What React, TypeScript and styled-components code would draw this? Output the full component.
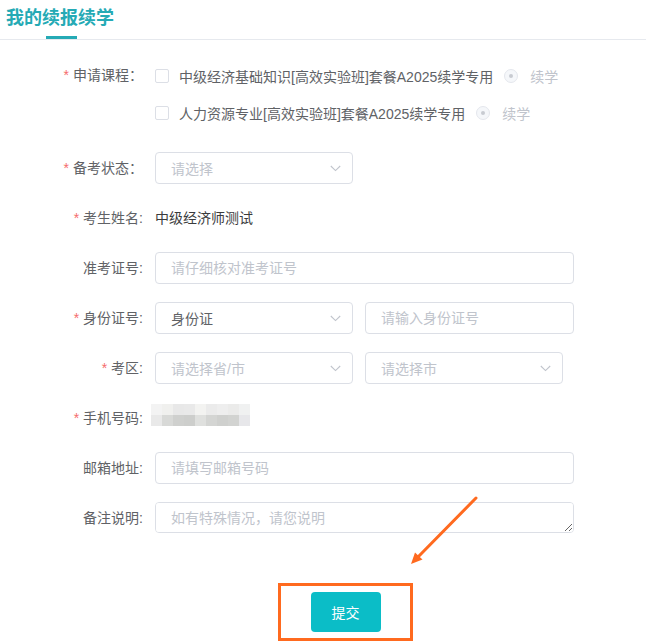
import React from "react";
import styled, { createGlobalStyle } from "styled-components";

const GlobalStyle = createGlobalStyle`
  html, body { margin: 0; padding: 0; background: #fff; }
  body {
    font-family: "Liberation Sans", "Noto Sans CJK SC", sans-serif;
    font-size: 14px;
    color: #606266;
  }
  * { box-sizing: border-box; }
`;

const Page = styled.div`
  position: relative;
  width: 646px;
  height: 642px;
  overflow: hidden;
`;

const Header = styled.div`
  padding: 6px 0 0 6px;
  border-bottom: 1px solid #e6e9ee;
`;

const Title = styled.div`
  font-size: 18px;
  font-weight: bold;
  line-height: 24px;
  color: #25aab5;
`;

const Indicator = styled.div`
  margin: 6px 0 0 40px;
  width: 31px;
  height: 3px;
  background: #25aab5;
`;

const Form = styled.div`
  padding-top: 17px;
`;

const FormItem = styled.div<{ $mb?: number }>`
  display: flex;
  align-items: flex-start;
  margin-bottom: ${(p) => (p.$mb ?? 18)}px;
`;

const Label = styled.div<{ $lh?: number }>`
  width: 155px;
  flex-shrink: 0;
  padding-right: 12px;
  text-align: right;
  line-height: ${(p) => p.$lh ?? 32}px;
  font-size: 14px;
  color: #606266;
  white-space: nowrap;
`;

const Star = styled.span`
  color: #f56c6c;
  margin-right: 4px;
`;

const Content = styled.div`
  display: flex;
  flex-direction: column;
`;

const Line = styled.div`
  display: flex;
  align-items: center;
  height: 37px;
`;

const CheckBox = styled.span`
  width: 14px;
  height: 14px;
  border: 1px solid #dcdfe6;
  border-radius: 2px;
  background: #fff;
  margin-right: 10px;
  flex-shrink: 0;
`;

const CourseText = styled.span`
  color: #606266;
  white-space: nowrap;
`;

const Radio = styled.span`
  position: relative;
  width: 14px;
  height: 14px;
  border-radius: 50%;
  border: 1px solid #e4e7ed;
  background: #f5f7fa;
  margin: 0 12px 0 11px;
  flex-shrink: 0;
  &::after {
    content: "";
    position: absolute;
    left: 50%;
    top: 50%;
    width: 4px;
    height: 4px;
    margin: -2px 0 0 -2px;
    border-radius: 50%;
    background: #c8cbd1;
  }
`;

const RadioText = styled.span`
  color: #c0c4cc;
`;

const Row = styled.div`
  display: flex;
  gap: 12px;
`;

const Select = styled.div<{ $w: number }>`
  width: ${(p) => p.$w}px;
  height: 32px;
  border: 1px solid #dcdfe6;
  border-radius: 4px;
  padding: 0 11px 0 15px;
  display: flex;
  align-items: center;
  justify-content: space-between;
  background: #fff;
`;

const SelectText = styled.span<{ $ph?: boolean }>`
  color: ${(p) => (p.$ph ? "#c0c4cc" : "#606266")};
  font-size: 14px;
`;

const Input = styled.input<{ $w: number }>`
  width: ${(p) => p.$w}px;
  height: 32px;
  border: 1px solid #dcdfe6;
  border-radius: 4px;
  padding: 0 15px;
  font: inherit;
  font-size: 14px;
  color: #606266;
  outline: none;
  background: #fff;
  &::placeholder { color: #c0c4cc; }
`;

const TextArea = styled.textarea`
  width: 419px;
  height: 31px;
  min-height: 31px;
  border: 1px solid #dcdfe6;
  border-radius: 4px;
  padding: 5px 15px;
  font: inherit;
  font-size: 14px;
  line-height: 20px;
  color: #606266;
  outline: none;
  resize: vertical;
  display: block;
  &::placeholder { color: #c0c4cc; }
`;

const Value = styled.span`
  line-height: 32px;
  color: #3a3b3d;
`;

const Mosaic = styled.svg`
  display: block;
  margin: 2px 0 0 -4px;
`;

const SubmitRow = styled.div`
  padding: 31px 0 0 278px;
`;

const Highlight = styled.div`
  width: 135px;
  height: 58px;
  border: 3px solid #ff6a1f;
  display: flex;
  align-items: center;
  justify-content: center;
`;

const SubmitButton = styled.button`
  width: 70px;
  height: 40px;
  border: none;
  border-radius: 4px;
  background: #0bbdc7;
  color: #fff;
  font: inherit;
  font-size: 14px;
  cursor: pointer;
`;

const ArrowLayer = styled.svg`
  position: absolute;
  left: 0;
  top: 0;
  pointer-events: none;
`;

const Chevron = () => (
  <svg width="11" height="7" viewBox="0 0 11 7">
    <path d="M0.8 1 L5.5 5.6 L10.2 1" fill="none" stroke="#c0c4cc" strokeWidth="1.1" />
  </svg>
);

const mosaicTop = ["#f3f3f3", "#f0f0ee", "#e8e8e8", "#e9e9e9", "#f3f3f1", "#ebebeb", "#eeeeee", "#ebebea", "#f0f1f1"];
const mosaicBottom = ["#e9e9e9", "#d8d9d7", "#cfd0ce", "#cdcecc", "#dfe0de", "#d4d5d3", "#cfd0ce", "#d2d3d1", "#e7e7ea"];

const courses = [
  "中级经济基础知识[高效实验班]套餐A2025续学专用",
  "人力资源专业[高效实验班]套餐A2025续学专用",
];

export default function App() {
  return (
    <Page>
      <GlobalStyle />
      <Header>
        <Title>我的续报续学</Title>
        <Indicator />
      </Header>
      <Form>
        <FormItem $mb={21}>
          <Label $lh={37}>
            <Star>*</Star>申请课程：
          </Label>
          <Content>
            {courses.map((c) => (
              <Line key={c}>
                <CheckBox />
                <CourseText>{c}</CourseText>
                <Radio />
                <RadioText>续学</RadioText>
              </Line>
            ))}
          </Content>
        </FormItem>

        <FormItem>
          <Label>
            <Star>*</Star>备考状态：
          </Label>
          <Select $w={198}>
            <SelectText $ph>请选择</SelectText>
            <Chevron />
          </Select>
        </FormItem>

        <FormItem>
          <Label>
            <Star>*</Star>考生姓名:
          </Label>
          <Value>中级经济师测试</Value>
        </FormItem>

        <FormItem>
          <Label>准考证号:</Label>
          <Input $w={419} placeholder="请仔细核对准考证号" />
        </FormItem>

        <FormItem>
          <Label>
            <Star>*</Star>身份证号:
          </Label>
          <Row>
            <Select $w={198}>
              <SelectText>身份证</SelectText>
              <Chevron />
            </Select>
            <Input $w={209} placeholder="请输入身份证号" />
          </Row>
        </FormItem>

        <FormItem>
          <Label>
            <Star>*</Star>考区:
          </Label>
          <Row>
            <Select $w={198}>
              <SelectText $ph>请选择省/市</SelectText>
              <Chevron />
            </Select>
            <Select $w={198}>
              <SelectText $ph>请选择市</SelectText>
              <Chevron />
            </Select>
          </Row>
        </FormItem>

        <FormItem>
          <Label>
            <Star>*</Star>手机号码:
          </Label>
          <Mosaic width="99" height="22" viewBox="0 0 99 22">
            {mosaicTop.map((c, i) => (
              <rect key={"t" + i} x={i * 11} y={0} width={11} height={11} fill={c} />
            ))}
            {mosaicBottom.map((c, i) => (
              <rect key={"b" + i} x={i * 11} y={11} width={11} height={11} fill={c} />
            ))}
          </Mosaic>
        </FormItem>

        <FormItem>
          <Label>邮箱地址:</Label>
          <Input $w={419} placeholder="请填写邮箱号码" />
        </FormItem>

        <FormItem>
          <Label>备注说明:</Label>
          <TextArea placeholder="如有特殊情况，请您说明" />
        </FormItem>

        <SubmitRow>
          <Highlight>
            <SubmitButton>提交</SubmitButton>
          </Highlight>
        </SubmitRow>
      </Form>

      <ArrowLayer width="646" height="642" viewBox="0 0 646 642">
        <line x1="476" y1="498" x2="418" y2="557" stroke="#ff6a1f" strokeWidth="3" strokeLinecap="round" />
        <polygon points="411,564 415,552.5 422.5,559.5" fill="#ff6a1f" />
      </ArrowLayer>
    </Page>
  );
}
